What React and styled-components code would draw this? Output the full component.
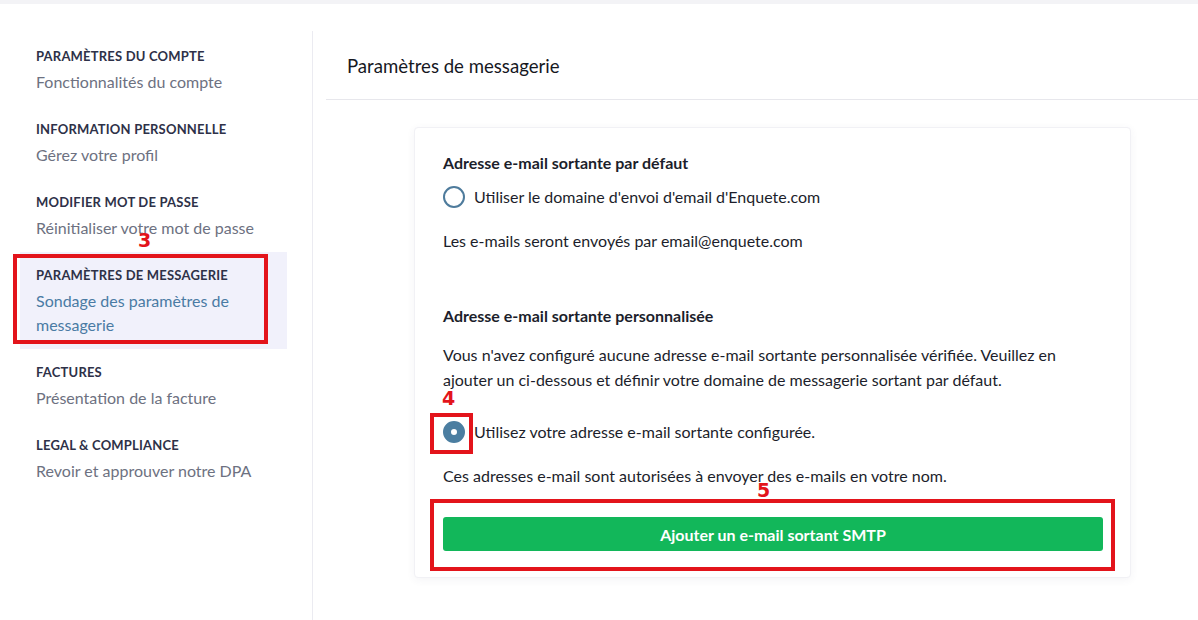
import React from "react";
import styled, { createGlobalStyle } from "styled-components";

const Global = createGlobalStyle`
  html, body { margin: 0; padding: 0; background: #ffffff; }
  body { font-family: Lato, "Open Sans", sans-serif; color: #1c1e2b; }
  * { box-sizing: border-box; }
`;

const Page = styled.div`
  position: relative;
  width: 1198px;
  height: 620px;
  overflow: hidden;
  background: #fff;
`;

const TopStrip = styled.div`
  height: 4px;
  background: #f3f3f6;
`;

const Body = styled.div`
  display: flex;
  margin-top: 27px;
  height: 589px;
`;

const Sidebar = styled.nav`
  width: 313px;
  flex: none;
  border-right: 1px solid #ebebf1;
  padding-top: 2px;
  display: flex;
  flex-direction: column;
`;

const NavItem = styled.div`
  margin: 0 25px 0 20px;
  padding: 14px 16px 12px;
  background: ${(p) => (p.$active ? "#f1f1fb" : "transparent")};
`;

const NavTitle = styled.div`
  font-size: 13px;
  line-height: 18px;
  font-weight: 700;
  color: #2e3148;
  letter-spacing: 0.2px;
  text-transform: uppercase;
  margin-bottom: 5px;
`;

const NavSub = styled.div`
  font-size: 16px;
  line-height: 24px;
  color: ${(p) => (p.$active ? "#4a7ba4" : "#6d7181")};
`;

const Main = styled.main`
  flex: 1;
  margin-left: 13px;
  display: flex;
  flex-direction: column;
`;

const Header = styled.header`
  height: 69px;
  border-bottom: 1px solid #e7e7ec;
  padding-left: 21px;
  display: flex;
  align-items: center;
  padding-top: 1px;
  font-size: 18.6px;
  color: #16181f;
`;

const Card = styled.section`
  margin: 27px 0 0 88px;
  width: 717px;
  background: #fff;
  border-radius: 4px;
  border: 1px solid #f1f1f5;
  box-shadow: 0 2px 8px rgba(60, 60, 110, 0.06);
  padding: 23px 27px 26px 28px;
  display: flex;
  flex-direction: column;
`;

const SectionTitle = styled.h3`
  margin: ${(p) => p.$mt || 0}px 0 0;
  font-size: 16px;
  line-height: 24px;
  font-weight: 700;
  color: #1c1e2b;
`;

const Text = styled.p`
  margin: ${(p) => p.$mt || 0}px 0 0;
  font-size: 16px;
  line-height: 25px;
  color: #1c1e2b;
`;

const RadioRow = styled.label`
  display: flex;
  align-items: center;
  gap: 9px;
  margin-top: ${(p) => p.$mt || 0}px;
  font-size: 16px;
  line-height: 24px;
  color: #1c1e2b;
`;

const Radio = styled.span`
  width: 22px;
  height: 22px;
  flex: none;
  border-radius: 50%;
  border: ${(p) => (p.$checked ? "8px solid #4b7ea1" : "2px solid #4e7b9c")};
  background: #fff;
`;

const Button = styled.button`
  margin-top: 29px;
  height: 34px;
  width: 100%;
  border: none;
  border-radius: 3px;
  background: #12b75a;
  color: #fff;
  font-family: inherit;
  font-size: 16px;
  font-weight: 700;
  cursor: pointer;
`;

const Marker = styled.div`
  position: absolute;
  left: ${(p) => p.$x}px;
  top: ${(p) => p.$y}px;
  width: ${(p) => p.$w}px;
  height: ${(p) => p.$h}px;
  border: 4px solid #e3141b;
  pointer-events: none;
`;

const MarkerLabel = styled.span`
  position: absolute;
  left: ${(p) => p.$x}px;
  top: ${(p) => p.$y}px;
  font-family: "DejaVu Sans", sans-serif;
  font-weight: 700;
  font-size: 19px;
  line-height: 19px;
  color: #e3141b;
`;

const navItems = [
  { title: "Paramètres du compte", sub: "Fonctionnalités du compte" },
  { title: "Information personnelle", sub: "Gérez votre profil" },
  { title: "Modifier mot de passe", sub: "Réinitialiser votre mot de passe" },
  {
    title: "Paramètres de messagerie",
    sub: "Sondage des paramètres de messagerie",
    active: true,
  },
  { title: "Factures", sub: "Présentation de la facture" },
  { title: "Legal & Compliance", sub: "Revoir et approuver notre DPA" },
];

export default function App() {
  return (
    <Page>
      <Global />
      <TopStrip />
      <Body>
        <Sidebar>
          {navItems.map((it) => (
            <NavItem key={it.title} $active={it.active}>
              <NavTitle>{it.title}</NavTitle>
              <NavSub $active={it.active}>
                {it.active ? (
                  <>
                    Sondage des paramètres de
                    <br />
                    messagerie
                  </>
                ) : (
                  it.sub
                )}
              </NavSub>
            </NavItem>
          ))}
        </Sidebar>
        <Main>
          <Header>Paramètres de messagerie</Header>
          <Card>
            <SectionTitle>Adresse e-mail sortante par défaut</SectionTitle>
            <RadioRow $mt={10}>
              <Radio />
              Utiliser le domaine d'envoi d'email d'Enquete.com
            </RadioRow>
            <Text $mt={19}>Les e-mails seront envoyés par email@enquete.com</Text>
            <SectionTitle $mt={51}>Adresse e-mail sortante personnalisée</SectionTitle>
            <Text $mt={14}>
              Vous n'avez configuré aucune adresse e-mail sortante personnalisée vérifiée. Veuillez en
              ajouter un ci-dessous et définir votre domaine de messagerie sortant par défaut.
            </Text>
            <RadioRow $mt={28}>
              <Radio $checked />
              Utilisez votre adresse e-mail sortante configurée.
            </RadioRow>
            <Text $mt={19}>
              Ces adresses e-mail sont autorisées à envoyer des e-mails en votre nom.
            </Text>
            <Button>Ajouter un e-mail sortant SMTP</Button>
          </Card>
        </Main>
      </Body>

      <Marker $x={13} $y={254} $w={255} $h={90} />
      <MarkerLabel $x={138} $y={231}>3</MarkerLabel>
      <Marker $x={430} $y={413} $w={43} $h={41} />
      <MarkerLabel $x={442} $y={389}>4</MarkerLabel>
      <Marker $x={430} $y={499} $w={685} $h={72} />
      <MarkerLabel $x={757} $y={481}>5</MarkerLabel>
    </Page>
  );
}
